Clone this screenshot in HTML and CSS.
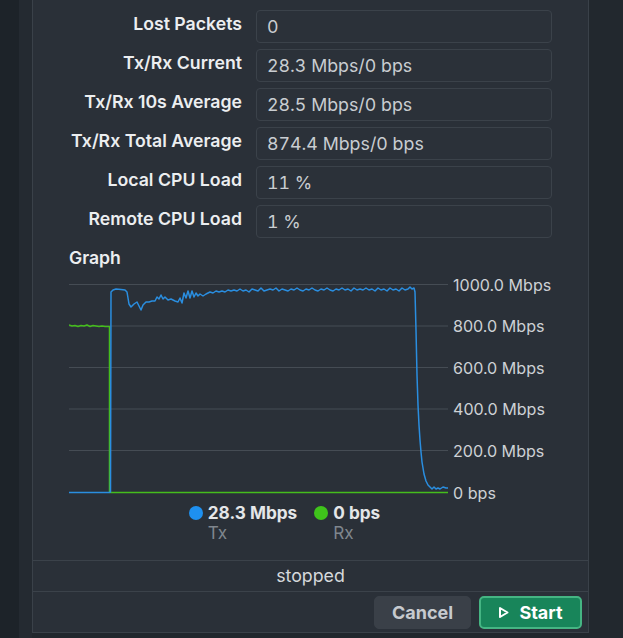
FILE: index.html
```html
<!DOCTYPE html>
<html>
<head>
<meta charset="utf-8">
<link rel="stylesheet" href="styles.css">
</head>
<body>
<div class="strip-a"></div>
<div class="strip-b"></div>
<div class="dialog">
  <div class="dialog-body">
    <div class="stats">
      <div class="label">Lost Packets</div><div class="field">0</div>
      <div class="label">Tx/Rx Current</div><div class="field">28.3 Mbps/0 bps</div>
      <div class="label">Tx/Rx 10s Average</div><div class="field">28.5 Mbps/0 bps</div>
      <div class="label">Tx/Rx Total Average</div><div class="field">874.4 Mbps/0 bps</div>
      <div class="label">Local CPU Load</div><div class="field">11 %</div>
      <div class="label">Remote CPU Load</div><div class="field">1 %</div>
    </div>
    <div class="graph-title">Graph</div>
    <svg class="chart" width="483" height="235" viewBox="69 268 483 235">
      <g class="grid">
        <line x1="69" y1="284.5" x2="448" y2="284.5"/>
        <line x1="69" y1="326" x2="448" y2="326"/>
        <line x1="69" y1="367.5" x2="448" y2="367.5"/>
        <line x1="69" y1="409" x2="448" y2="409"/>
        <line x1="69" y1="450.5" x2="448" y2="450.5"/>
        <line x1="69" y1="492.5" x2="448" y2="492.5"/>
      </g>
      <g class="axis">
        <text x="453" y="290.5">1000.0 Mbps</text>
        <text x="453" y="332">800.0 Mbps</text>
        <text x="453" y="373.5">600.0 Mbps</text>
        <text x="453" y="415">400.0 Mbps</text>
        <text x="453" y="456.5">200.0 Mbps</text>
        <text x="453" y="498.5">0 bps</text>
      </g>
      <polyline class="rx" points="69,325 72,326 75,325.5 78,326.5 81,325.5 84,326 87,325 90,326.5 93,325.5 96,326 99,326.5 102,326 105,326.5 109.5,326.5 109.5,492.5 448,492.5"/>
      <polyline class="tx" points="69,492.5 109,492.5 110.5,492 111,292 113,290 116,289 121,289.5 125,290 127,292 129,304 131,307 134,304 137,302 139,306 141,310 143,305 146,302 149,302 152,301 155,301 157,297 159,299 161,295 163,299 165,297 168,300 171,299 175,301 178,302 180,298 182,303 184,293 186,298 188,291 190,298 192,291 194,297 196,293 198,296 200,294 203,296 206,294 210,292 213,293 216,291 219,292 222,291 225,292 228,290 231,291 234,290 237,291 240,289 243,291 246,290 249,292 252,289 255,290 258,291 261,288 264,291 267,290 270,289 273,290 276,288 279,291 282,289 285,290 288,291 291,289 294,290 297,288 300,290 303,291 306,289 309,290 312,288 315,290 318,291 321,289 324,290 327,288 330,290 333,291 336,289 339,290 342,288 345,290 348,289 351,291 354,288 357,290 360,289 363,290 366,288 369,290 372,289 375,291 378,288 381,290 384,289 387,291 390,288 393,290 396,289 399,291 402,288 405,290 408,289 410,287 412,289 414,288 415,292 416,330 417,375 418,405 419,425 420,440 421,452 422,462 424,474 426,481 428,485 430,487 432,489 434,487 436,489 438,488 440,489 443,487 446,488 448,488"/>
    </svg>
    <div class="legend">
      <div class="legend-item">
        <span class="dot dot-tx"></span>
        <div class="legend-text"><div class="legend-value">28.3 Mbps</div><div class="legend-name">Tx</div></div>
      </div>
      <div class="legend-item">
        <span class="dot dot-rx"></span>
        <div class="legend-text"><div class="legend-value">0 bps</div><div class="legend-name">Rx</div></div>
      </div>
    </div>
  </div>
  <div class="status">stopped</div>
  <div class="footer">
    <button class="btn btn-cancel">Cancel</button>
    <button class="btn btn-start"><svg class="play" width="12" height="13" viewBox="0 0 12 13"><path d="M2 2 L9.5 6.5 L2 11 Z" fill="none" stroke="#fff" stroke-width="2" stroke-linejoin="round"/></svg>Start</button>
  </div>
</div>
<div class="rest"></div>
</body>
</html>
```

FILE: styles.css
```css
html, body {
  margin: 0;
  padding: 0;
}
body {
  display: flex;
  width: 623px;
  height: 638px;
  overflow: hidden;
  background: #21272d;
  font-family: Inter, "Noto Sans", sans-serif;
  color: #e4e6e8;
}
.strip-a {
  width: 19px;
  background: #1d2329;
}
.strip-b {
  width: 13px;
  background: #242a31;
}
.dialog {
  width: 555px;
  height: 632px;
  background: #2a3038;
  border: 1px solid #3a4149;
  border-top: none;
  display: flex;
  flex-direction: column;
  box-sizing: content-box;
}
.rest {
  flex: 1;
  background: #22282e;
}
.dialog-body {
  padding: 10px 36px 0 36px;
}
.stats {
  display: grid;
  grid-template-columns: 173px 296px;
  column-gap: 14px;
  row-gap: 6px;
}
.label {
  height: 33px;
  line-height: 27px;
  text-align: right;
  font-size: 17.7px;
  font-weight: 600;
  color: #eceef0;
  white-space: nowrap;
}
.field {
  height: 33px;
  box-sizing: border-box;
  border: 1px solid #3b424a;
  border-radius: 4px;
  background: #2b3139;
  padding: 0 10px;
  line-height: 32px;
  font-size: 17.8px;
  color: #c9cdd1;
  font-variant-numeric: tabular-nums;
  font-feature-settings: "tnum";
}
.graph-title {
  margin-top: 10px;
  height: 20px;
  line-height: 20px;
  font-size: 17.6px;
  font-weight: 600;
  color: #eceef0;
}
.chart {
  display: block;
}
.grid line {
  stroke: #454c54;
  stroke-width: 1;
}
.axis text {
  font-family: Inter, "Noto Sans", sans-serif;
  font-size: 16.1px;
  fill: #cdd1d5;
}
.tx {
  fill: none;
  stroke: #2a8ee0;
  stroke-width: 1.5;
  stroke-linejoin: round;
}
.rx {
  fill: none;
  stroke: #45bd1c;
  stroke-width: 1.5;
  stroke-linejoin: round;
}
.legend {
  display: flex;
  justify-content: center;
  gap: 17px;
  padding-right: 52px;
  height: 57px;
}
.legend-item {
  display: flex;
  align-items: flex-start;
  gap: 5px;
}
.dot {
  width: 14px;
  height: 14px;
  border-radius: 50%;
  margin-top: 3px;
}
.dot-tx { background: #1e90f0; }
.dot-rx { background: #3fc41b; }
.legend-value {
  font-size: 17.2px;
  font-weight: 700;
  line-height: 20px;
  color: #e4e6e8;
}
.legend-name {
  font-size: 17.2px;
  line-height: 20px;
  color: #7f868d;
}
.status {
  border-top: 1px solid #3b424a;
  border-bottom: 1px solid #3b424a;
  height: 30px;
  line-height: 30px;
  text-align: center;
  font-size: 17.8px;
  color: #d6d9dc;
}
.footer {
  display: flex;
  justify-content: flex-end;
  gap: 8px;
  padding: 4px 6px 0 0;
}
.btn {
  height: 33px;
  box-sizing: border-box;
  border-radius: 5px;
  font-family: Inter, "Noto Sans", sans-serif;
  font-size: 18px;
  font-weight: 700;
  display: flex;
  align-items: center;
  justify-content: center;
}
.btn-cancel {
  width: 97px;
  background: #3a4048;
  border: 1px solid #3a4048;
  color: #c6cacf;
}
.btn-start {
  width: 103px;
  background: #18855a;
  border: 2px solid #45b583;
  color: #ffffff;
  gap: 9px;
}
.play {
  display: block;
}
```
